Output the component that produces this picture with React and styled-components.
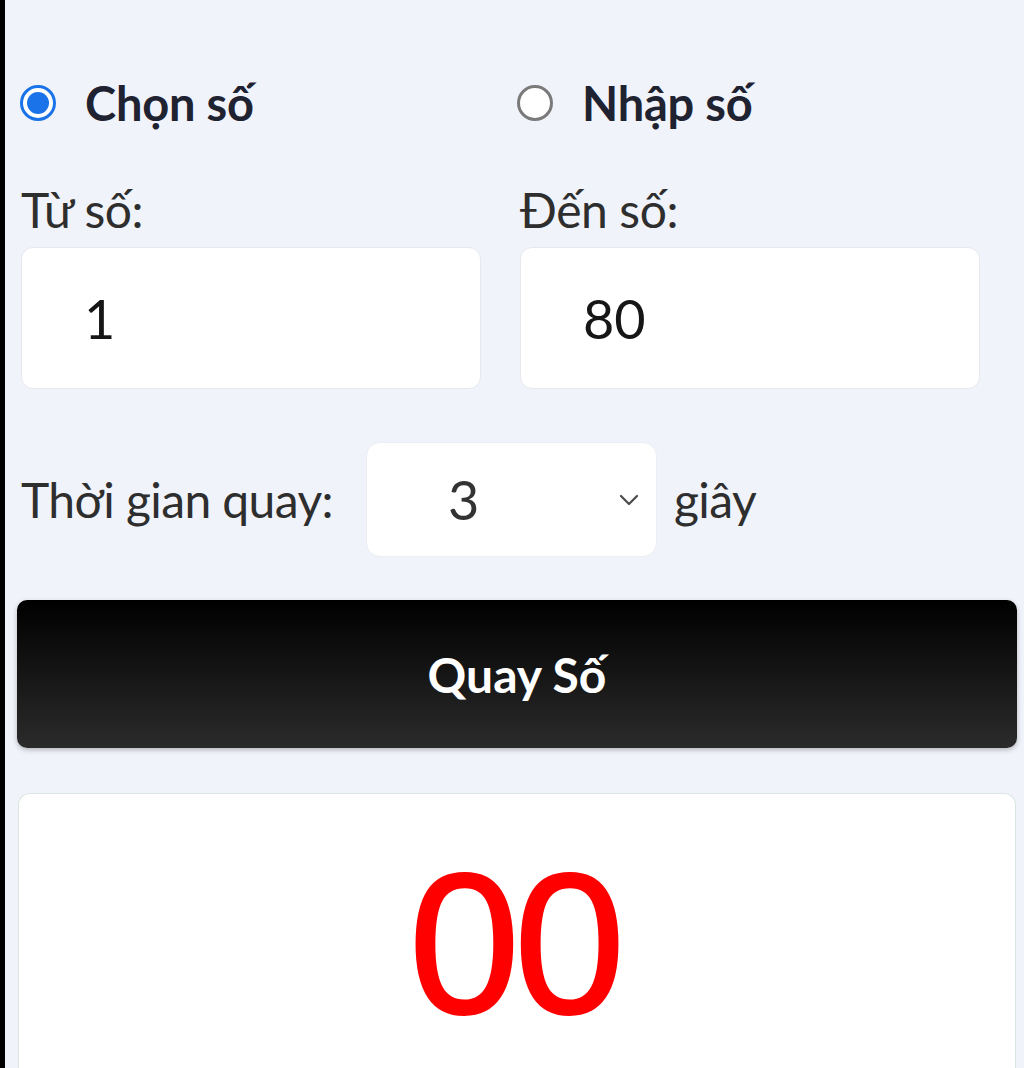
import React, { useState } from "react";
import styled, { createGlobalStyle } from "styled-components";

const Global = createGlobalStyle`
  html, body { margin: 0; padding: 0; }
  body { background: #f1f3fa; font-family: "Lato", "Noto Sans", sans-serif; color: #2b2b2b; }
  * { box-sizing: border-box; }
`;

const Frame = styled.div`
  border-left: 5px solid #000;
  background: #f1f3fa;
  padding: 78px 7px 0 12px;
  display: flex;
  flex-direction: column;
  overflow: hidden;
  height: 1068px;
`;

const Form = styled.div`
  padding: 0 0 0 4px;
  display: flex;
  flex-direction: column;
`;

const TwoCols = styled.div`
  display: grid;
  grid-template-columns: 460px 460px;
  column-gap: 39px;
  margin-top: ${(p) => p.$mt || 0}px;
`;

const RadioOption = styled.label`
  display: flex;
  align-items: center;
  gap: 29px;
  height: 50px;
  margin-left: ${(p) => p.$shift || -1}px;
  font-size: 47px;
  font-weight: 700;
  color: #1f2230;
  cursor: pointer;
  letter-spacing: -0.2px;
`;

const RadioDot = styled.span`
  width: 36px;
  height: 36px;
  border-radius: 50%;
  flex: none;
  border: 3px solid ${(p) => (p.$on ? "#1a73e8" : "#7a7a7a")};
  background: #fff;
  display: flex;
  align-items: center;
  justify-content: center;
  &::after {
    content: "";
    width: 22px;
    height: 22px;
    border-radius: 50%;
    background: ${(p) => (p.$on ? "#1a73e8" : "transparent")};
  }
`;

const Field = styled.div`
  display: flex;
  flex-direction: column;
  gap: 9px;
`;

const Label = styled.div`
  font-size: 48px;
  line-height: 57px;
  color: #2e2e2e;
  letter-spacing: -0.4px;
`;

const NumberBox = styled.div`
  height: 142px;
  background: #fff;
  border: 1px solid #e6e8ee;
  border-radius: 12px;
  display: flex;
  align-items: center;
  padding-left: 62px;
  font-size: 54px;
  color: #161616;
`;

const TimeRow = styled.div`
  display: flex;
  align-items: center;
  margin-top: 53px;
  font-size: 48px;
  letter-spacing: -0.6px;
  color: #2e2e2e;
`;

const SelectBox = styled.div`
  width: 291px;
  height: 115px;
  margin-left: 33px;
  margin-right: 17px;
  background: #fff;
  border: 1px solid #eceef3;
  border-radius: 14px;
  display: flex;
  align-items: center;
  justify-content: space-between;
  padding: 0 17px 0 81px;
  font-size: 54px;
  letter-spacing: 0;
  color: #333;
`;

const SpinButton = styled.button`
  margin-top: 43px;
  height: 148px;
  width: 1000px;
  border: none;
  border-radius: 10px;
  background: linear-gradient(180deg, #000 0%, #2b2b2b 100%);
  box-shadow: 0 2px 5px rgba(0, 0, 0, 0.25);
  color: #fff;
  font-family: "Lato", "Noto Sans", sans-serif;
  font-weight: 700;
  font-size: 48px;
  cursor: pointer;
`;

const ResultCard = styled.div`
  margin-top: 45px;
  margin-left: 1px;
  width: 998px;
  flex: 1;
  background: #fff;
  border: 1px solid #d9e6e2;
  border-bottom: none;
  border-radius: 12px 12px 0 0;
  padding-top: 50px;
  display: flex;
  justify-content: center;
`;

const ResultNumber = styled.div`
  font-family: "Liberation Sans", Arial, sans-serif;
  font-size: 200px;
  line-height: 1;
  color: #ff0000;
  -webkit-text-stroke: 2px #ff0000;
  letter-spacing: -6px;
  height: 200px;
  margin-right: 6px;
`;

const Chevron = () => (
  <svg width="20" height="12" viewBox="0 0 20 12" fill="none">
    <path d="M2 2 L10 10 L18 2" stroke="#4a4a4a" strokeWidth="2.2" strokeLinecap="round" strokeLinejoin="round" />
  </svg>
);

export default function App() {
  const [mode, setMode] = useState("chon");
  return (
    <>
      <Global />
      <Frame>
        <Form>
          <TwoCols>
            <RadioOption onClick={() => setMode("chon")}>
              <RadioDot $on={mode === "chon"} />
              Chọn số
            </RadioOption>
            <RadioOption $shift={-3} onClick={() => setMode("nhap")}>
              <RadioDot $on={mode === "nhap"} />
              Nhập số
            </RadioOption>
          </TwoCols>
          <TwoCols $mt={53}>
            <Field>
              <Label>Từ số:</Label>
              <NumberBox>1</NumberBox>
            </Field>
            <Field>
              <Label>Đến số:</Label>
              <NumberBox>80</NumberBox>
            </Field>
          </TwoCols>
          <TimeRow>
            Thời gian quay:
            <SelectBox>
              <span>3</span>
              <Chevron />
            </SelectBox>
            giây
          </TimeRow>
        </Form>
        <SpinButton>Quay Số</SpinButton>
        <ResultCard>
          <ResultNumber>00</ResultNumber>
        </ResultCard>
      </Frame>
    </>
  );
}
